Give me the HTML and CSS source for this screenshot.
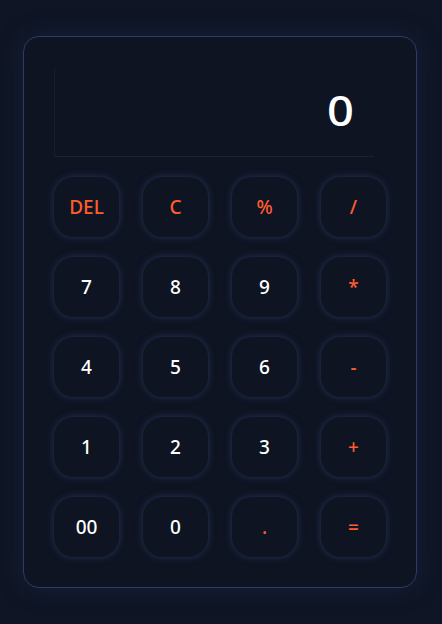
FILE: index.html
```html
<!DOCTYPE html>
<html>
<head>
<meta charset="utf-8">
<link rel="stylesheet" href="styles.css">
</head>
<body>
<div class="calc">
  <div class="display"><span class="value">0</span></div>
  <div class="keys">
    <button class="key op">DEL</button>
    <button class="key op">C</button>
    <button class="key op">%</button>
    <button class="key op">/</button>
    <button class="key">7</button>
    <button class="key">8</button>
    <button class="key">9</button>
    <button class="key op">*</button>
    <button class="key">4</button>
    <button class="key">5</button>
    <button class="key">6</button>
    <button class="key op">-</button>
    <button class="key">1</button>
    <button class="key">2</button>
    <button class="key">3</button>
    <button class="key op">+</button>
    <button class="key">00</button>
    <button class="key">0</button>
    <button class="key op">.</button>
    <button class="key op">=</button>
  </div>
</div>
</body>
</html>
```
FILE: styles.css
```css
html, body {
  margin: 0;
  padding: 0;
  background: #0f1524;
}
body {
  width: 442px;
  height: 624px;
  font-family: "Noto Sans", "DejaVu Sans", sans-serif;
  padding-top: 36px;
  padding-left: 23px;
  box-sizing: border-box;
}
.calc {
  width: 394px;
  height: 552px;
  box-sizing: border-box;
  border: 1px solid #2b3b63;
  border-radius: 16px;
  background: #0e1422;
  padding: 31px 30px 30px 30px;
  box-shadow: 0 0 24px rgba(36, 52, 100, 0.35);
}
.display {
  width: 320px;
  height: 89px;
  box-sizing: border-box;
  border-left: 1px solid #161e30;
  border-bottom: 1px solid #1a2234;
  margin-bottom: 20px;
  display: flex;
  justify-content: flex-end;
  align-items: center;
  padding-right: 20px;
}
.value {
  color: #ffffff;
  font-size: 42px;
  font-weight: 500;
  line-height: 1;
  margin-top: -4px;
  transform: scaleX(1.12);
  transform-origin: right center;
}
.keys {
  display: grid;
  grid-template-columns: repeat(4, 65px);
  grid-auto-rows: 60px;
  column-gap: 24px;
  row-gap: 20px;
}
.key {
  border: none;
  border-radius: 20px;
  background: #0e1422;
  color: #ffffff;
  font-family: inherit;
  font-size: 19px;
  font-weight: 500;
  padding: 0;
  box-shadow: 0 0 7px rgba(64, 86, 150, 0.5);
}
.key.op {
  color: #ff5c2e;
}
```
